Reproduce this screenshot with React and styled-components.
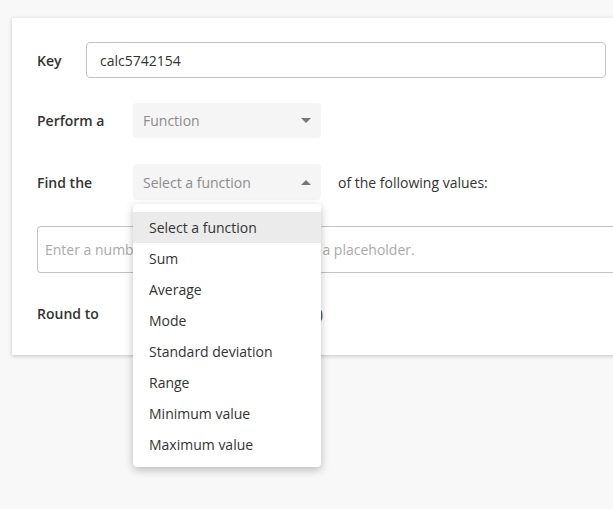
import React from 'react';
import styled, { createGlobalStyle } from 'styled-components';

const Global = createGlobalStyle`
  html, body {
    margin: 0;
    padding: 0;
    background: #f8f8f8;
    overflow: hidden;
    font-family: "Open Sans", "Liberation Sans", sans-serif;
    font-size: 14px;
    color: #333;
  }
`;

const Page = styled.div`
  width: 613px;
  height: 509px;
  padding: 18px 0 0 12px;
  box-sizing: border-box;
  overflow: hidden;
`;

const Card = styled.div`
  width: 660px;
  background: #fff;
  box-shadow: 0 1px 4px rgba(0, 0, 0, 0.22);
  padding: 24px 0 32px 25px;
  box-sizing: border-box;
  display: flex;
  flex-direction: column;
`;

const Row = styled.div`
  display: flex;
  align-items: center;
  margin-bottom: ${p => p.gap || 0}px;
`;

const Label = styled.div`
  width: ${p => p.width || 96}px;
  font-weight: 600;
  flex-shrink: 0;
`;

const TextInput = styled.div`
  width: 520px;
  height: 36px;
  border: 1px solid #c4c4c4;
  border-radius: 4px;
  box-sizing: border-box;
  display: flex;
  align-items: center;
  padding-left: 13px;
`;

const SelectWrap = styled.div`
  position: relative;
  width: 188px;
`;

const Select = styled.div`
  height: ${p => p.h || 35}px;
  background: #f5f5f5;
  border-radius: 4px;
  display: flex;
  align-items: center;
  justify-content: space-between;
  padding: 0 10px 0 10px;
  color: #8c8c8c;
`;

const Arrow = styled.span`
  width: 0;
  height: 0;
  border-left: 5px solid transparent;
  border-right: 5px solid transparent;
  ${p => (p.up ? 'border-bottom: 5px solid #777;' : 'border-top: 5px solid #777;')}
`;

const Menu = styled.div`
  position: absolute;
  top: 40px;
  left: 0;
  width: 188px;
  background: #fff;
  border-radius: 4px;
  box-shadow: 0 3px 8px rgba(0, 0, 0, 0.25);
  padding: 8px 0 7px;
  z-index: 10;
`;

const Item = styled.div`
  height: 31px;
  line-height: 31px;
  padding-left: 16px;
  color: #333;
  background: ${p => (p.active ? '#ebebeb' : 'transparent')};
`;

const After = styled.span`
  margin-left: 17px;
`;

const Area = styled.div`
  height: 47px;
  border: 1px solid #c4c4c4;
  border-right: none;
  border-radius: 4px 0 0 4px;
  box-sizing: border-box;
  display: flex;
  align-items: center;
  padding-left: 7px;
  color: #aaa;
  white-space: nowrap;
  margin-bottom: 31px;
`;

const Places = styled.span`
  width: 190px;
  text-align: right;
  white-space: nowrap;
  color: #333;
`;

const items = [
  'Select a function',
  'Sum',
  'Average',
  'Mode',
  'Standard deviation',
  'Range',
  'Minimum value',
  'Maximum value',
];

export default function App() {
  return (
    <Page>
      <Global />
      <Card>
        <Row gap={25}>
          <Label width={49}>Key</Label>
          <TextInput>calc5742154</TextInput>
        </Row>
        <Row gap={26}>
          <Label>Perform a</Label>
          <SelectWrap>
            <Select>
              Function
              <Arrow />
            </Select>
          </SelectWrap>
        </Row>
        <Row gap={26}>
          <Label>Find the</Label>
          <SelectWrap>
            <Select h={36}>
              Select a function
              <Arrow up />
            </Select>
            <Menu>
              {items.map((t, i) => (
                <Item key={t} active={i === 0}>
                  {t}
                </Item>
              ))}
            </Menu>
          </SelectWrap>
          <After>of the following values:</After>
        </Row>
        <Area>Enter a number or reference a field key as a placeholder.</Area>
        <Row>
          <Label>Round to</Label>
          <Places>2 decimal places (0)</Places>
        </Row>
      </Card>
    </Page>
  );
}
